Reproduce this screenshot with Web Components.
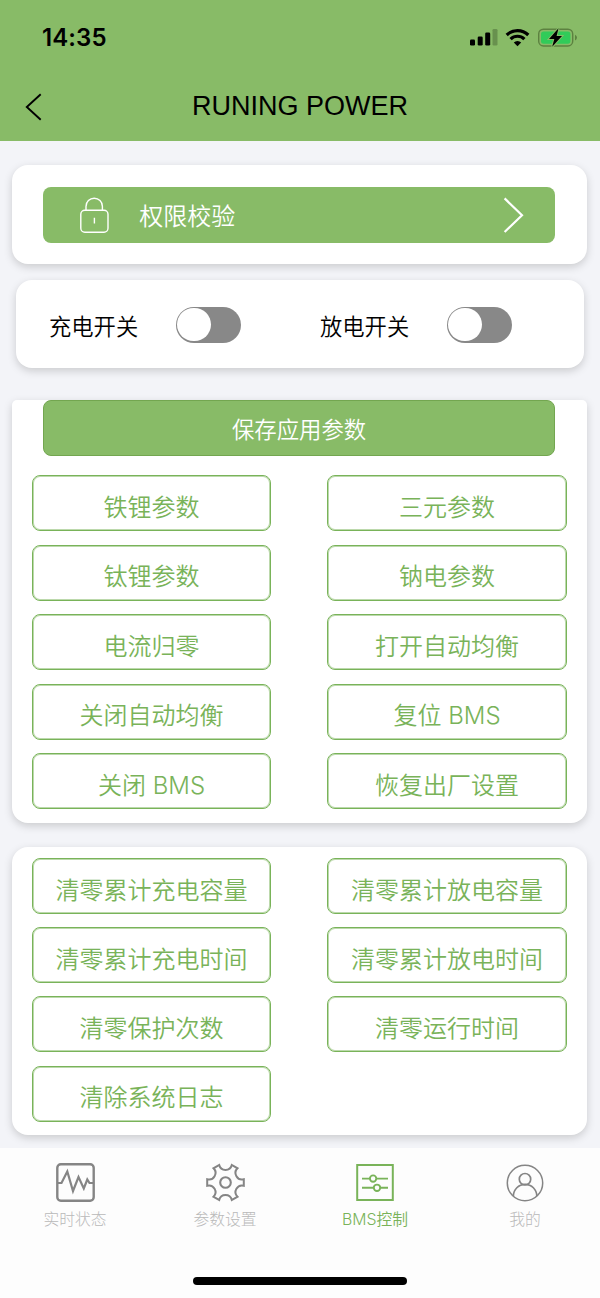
<!DOCTYPE html>
<html lang="zh-CN">
<head>
<meta charset="utf-8">
<title>RUNING POWER</title>
<style>
  body {
    margin: 0;
    background: #f3f4f8;
    font-family: "Liberation Sans", "Noto Sans CJK SC", sans-serif;
    --green: #88bb67;
    --line: #79b359;
    --light-font: Inter, "Noto Sans CJK SC", sans-serif;
  }
</style>
</head>
<body>
<bms-app></bms-app>

<script>
class StatusBar extends HTMLElement {
  constructor() {
    super();
    this.attachShadow({ mode: 'open' });
    this.shadowRoot.innerHTML = `
      <style>
        :host {
          display: flex;
          justify-content: space-between;
          align-items: center;
          height: 74px;
          padding: 1px 23px 0 42px;
          box-sizing: border-box;
        }
        #time {
          font: 600 24px/30px Inter, sans-serif;
          letter-spacing: 0.1px;
        }
        svg { display: block; }
      </style>
      <span id="time">14:35</span>
      <svg width="108" height="24" viewBox="469 25.5 108 24">
        <rect x="470" y="39" width="5" height="6" rx="1.3"/>
        <rect x="477.7" y="36" width="5" height="9" rx="1.3"/>
        <rect x="485.2" y="32" width="5" height="13" rx="1.3"/>
        <rect x="492.5" y="28.5" width="5" height="16.5" rx="1.3" fill="#68914e"/>
        <g fill="none" stroke="#000" stroke-width="3.2">
          <path d="M506.7 34.5 A15.5 15.5 0 0 1 528.3 34.5"/>
          <path d="M510.6 38.6 A9.8 9.8 0 0 1 524.4 38.6"/>
        </g>
        <path d="M513.8 42 A5.2 5.2 0 0 1 521.2 42 L517.5 45.8 Z"/>
        <rect x="538.7" y="28.7" width="34" height="16.8" rx="4.8" fill="none" stroke="#5c8140" stroke-width="1.4"/>
        <rect x="541" y="31" width="29.4" height="12.2" rx="2.6" fill="#31cb59"/>
        <path d="M575 34.2 Q577 35 577 37.1 Q577 39.2 575 40 Z" fill="#5c8140"/>
        <path d="M558.5 27.8 L549 38.6 H554.3 L552.2 46.3 L562 35.4 H556.6 Z" stroke="#88bb67" stroke-width="2" paint-order="stroke"/>
      </svg>
    `;
  }
}
customElements.define('status-bar', StatusBar);

class NavBar extends HTMLElement {
  constructor() {
    super();
    this.attachShadow({ mode: 'open' });
    this.shadowRoot.innerHTML = `
      <style>
        :host {
          display: grid;
          grid-template-columns: 60px 1fr 60px;
          align-items: center;
          height: 67px;
          padding-bottom: 3px;
          box-sizing: border-box;
        }
        svg { display: block; margin: 2px 0 0 24px; }
        h1 {
          margin: 0;
          font-size: 27px;
          line-height: 32px;
          font-weight: 400;
          text-align: center;
        }
      </style>
      <svg width="20" height="28" viewBox="0 0 20 28" fill="none" stroke="#000" stroke-width="1.9">
        <path d="M16.7 1.2 L2.8 14 L16.7 26.8"/>
      </svg>
      <h1><slot></slot></h1>
    `;
  }
}
customElements.define('nav-bar', NavBar);

class BmsCard extends HTMLElement {
  constructor() {
    super();
    this.attachShadow({ mode: 'open' });
    this.shadowRoot.innerHTML = `
      <style>
        :host {
          display: block;
          box-sizing: border-box;
          background: #fff;
          border-radius: 16px;
          box-shadow: 0 3px 8px rgba(0, 0, 0, 0.17);
        }
      </style>
      <slot></slot>
    `;
  }
}
customElements.define('bms-card', BmsCard);

class AuthButton extends HTMLElement {
  constructor() {
    super();
    this.attachShadow({ mode: 'open' });
    this.shadowRoot.innerHTML = `
      <style>
        :host {
          display: flex;
          align-items: center;
          height: 56px;
          padding: 0 30px 0 35px;
          box-sizing: border-box;
          border-radius: 8px;
          background: var(--green);
          color: #fff;
          font-size: 24px;
          line-height: 32px;
        }
        span { flex: 1; margin-left: 29px; padding-top: 3px; font-weight: 350; }
        svg { display: block; }
      </style>
      <svg width="32" height="40" viewBox="79 195 32 40" fill="none" stroke="#fff" stroke-width="1.4">
        <rect x="81.8" y="210.2" width="27.2" height="22" rx="4"/>
        <path d="M87 210 V206.4 A8.2 8.2 0 0 1 103.4 206.4 V210 M95.4 217.8 V223.6"/>
      </svg>
      <span><slot></slot></span>
      <svg width="22" height="36" viewBox="503 197 22 36" fill="none" stroke="#fff" stroke-width="2.2">
        <path d="M504.6 198.4 L522 215.2 L504.6 232"/>
      </svg>
    `;
  }
}
customElements.define('auth-button', AuthButton);

class LabelSwitch extends HTMLElement {
  constructor() {
    super();
    this.attachShadow({ mode: 'open' });
    this.shadowRoot.innerHTML = `
      <style>
        :host {
          flex: none;
          display: flex;
          align-items: center;
          gap: 38px;
          width: 271px;
          font-size: 22.3px;
          line-height: 30px;
          font-weight: 350;
          color: #000;
        }
        #label { padding-top: 6px; }
        #track {
          width: 65px;
          height: 36px;
          padding: 1.2px;
          box-sizing: border-box;
          border-radius: 18px;
          background: #888;
        }
        #thumb {
          width: 33.6px;
          height: 33.6px;
          border-radius: 50%;
          background: #fff;
        }
      </style>
      <span id="label"><slot></slot></span>
      <div id="track"><div id="thumb"></div></div>
    `;
  }
}
customElements.define('label-switch', LabelSwitch);

class BmsButton extends HTMLElement {
  constructor() {
    super();
    this.attachShadow({ mode: 'open' });
    this.shadowRoot.innerHTML = `
      <style>
        :host {
          display: flex;
          align-items: center;
          justify-content: center;
          height: 56px;
          padding-top: 9px;
          box-sizing: border-box;
          border: 1px solid var(--line);
          border-radius: 8px;
          box-shadow: inset 0 0 0 1px rgba(121, 179, 89, 0.5);
          background: #fff;
          color: var(--line);
          font-family: var(--light-font);
          font-size: 24px;
          line-height: 32px;
          font-weight: 350;
        }
        :host([primary]) {
          padding-top: 3px;
          border: 1px solid #73a650;
          box-shadow: none;
          background: var(--green);
          color: #fff;
          font-size: 22.4px;
        }
      </style>
      <span><slot></slot></span>
    `;
  }
}
customElements.define('bms-button', BmsButton);

class ButtonGrid extends HTMLElement {
  constructor() {
    super();
    this.attachShadow({ mode: 'open' });
    this.shadowRoot.innerHTML = `
      <style>
        :host {
          display: grid;
          grid-template-columns: 239.5px 239.5px;
          column-gap: 56px;
          row-gap: 13.6px;
          padding-left: 20.3px;
        }
      </style>
      <slot></slot>
    `;
  }
}
customElements.define('button-grid', ButtonGrid);

const TAB_ICONS = {
  status: `
    <rect x="1.3" y="1.3" width="36.4" height="36.4" rx="3.5" stroke-width="2.4"/>
    <path d="M2 20 H5.5 L11.3 8.5 L17 28 L22.5 14 L27.8 25.5 L31.3 16.5 L33.5 20 H37" stroke-width="2.2"/>`,
  settings: `
    <circle cx="19.5" cy="19.5" r="5.3" stroke-width="2.1"/>
    <path stroke-width="2" d="M13.2 2 A6.5 6.5 0 0 0 25.8 2 L31.5 5.3 A6.5 6.5 0 0 0 37.8 16.2 V22.8 A6.5 6.5 0 0 0 31.5 33.7 L25.8 37 A6.5 6.5 0 0 0 13.2 37 L7.5 33.7 A6.5 6.5 0 0 0 1.2 22.8 V16.2 A6.5 6.5 0 0 0 7.5 5.3 Z"/>`,
  control: `
    <rect x="1.2" y="2" width="35.6" height="35" stroke-width="2"/>
    <path d="M6 15.6 H13.8 M20.4 15.6 H32 M6 24.8 H17.8 M24.2 24.8 H32" stroke-width="1.9"/>
    <circle cx="17.1" cy="15.6" r="3.2" stroke-width="1.9"/>
    <circle cx="21" cy="24.8" r="3.2" stroke-width="1.9"/>`,
  mine: `
    <circle cx="19" cy="20" r="17.7" stroke-width="1.5"/>
    <circle cx="19" cy="16.2" r="5.7" stroke-width="1.7"/>
    <path d="M7.4 33 A11.7 11.7 0 0 1 30.8 33" stroke-width="1.7"/>`
};

class TabItem extends HTMLElement {
  constructor() {
    super();
    this.attachShadow({ mode: 'open' });
  }

  connectedCallback() {
    this.shadowRoot.innerHTML = `
      <style>
        :host {
          flex: 1;
          display: flex;
          flex-direction: column;
          align-items: center;
          padding-top: 15px;
          color: #b9b9b9;
          font-family: var(--light-font);
          font-size: 15.8px;
          line-height: 22px;
          font-weight: 300;
        }
        svg { display: block; margin-bottom: 7px; stroke: #858585; }
        :host([active]) { color: var(--line); font-weight: 350; }
        :host([active]) svg { stroke: var(--line); }
      </style>
      <svg width="39" height="39" viewBox="0 0 39 39" fill="none">${TAB_ICONS[this.getAttribute('icon')]}</svg>
      <span><slot></slot></span>
    `;
  }
}
customElements.define('tab-item', TabItem);

class TabBar extends HTMLElement {
  constructor() {
    super();
    this.attachShadow({ mode: 'open' });
    this.shadowRoot.innerHTML = `
      <style>
        :host {
          display: flex;
          flex-direction: column;
          justify-content: space-between;
          align-items: center;
          background: #fdfdfd;
        }
        nav { display: flex; width: 100%; }
        #home {
          width: 214px;
          height: 8px;
          margin-bottom: 13px;
          border-radius: 4px;
          background: #000;
        }
      </style>
      <nav><slot></slot></nav>
      <div id="home"></div>
    `;
  }
}
customElements.define('tab-bar', TabBar);

class BmsApp extends HTMLElement {
  constructor() {
    super();
    this.attachShadow({ mode: 'open' });
    this.shadowRoot.innerHTML = `
      <style>
        :host {
          display: flex;
          flex-direction: column;
          width: 600px;
          height: 1298px;
          overflow: hidden;
        }
        header { height: 141px; flex: none; background: var(--green); }
        main {
          flex: none;
          height: 1007px;
          padding: 24px 13px 0 11.5px;
          box-sizing: border-box;
          overflow: hidden;
        }
        .auth { height: 99px; padding: 22px 32px 0 31.7px; }
        .switches {
          display: flex;
          height: 88px;
          margin: 16px 3px 0 4.5px;
          padding: 1px 0 0 33px;
        }
        .params {
          height: 423px;
          margin-top: 32px;
          border-radius: 5px 5px 16px 16px;
        }
        .params bms-button[primary] { margin: 0 32px 19px 31.7px; }
        .clears { height: 287.5px; margin-top: 24px; padding-top: 11px; }
        .clears button-grid { row-gap: 13.2px; }
        tab-bar { flex: 1; }
      </style>
      <header>
        <status-bar></status-bar>
        <nav-bar>RUNING POWER</nav-bar>
      </header>
      <main>
        <bms-card class="auth">
          <auth-button>权限校验</auth-button>
        </bms-card>
        <bms-card class="switches">
          <label-switch>充电开关</label-switch>
          <label-switch>放电开关</label-switch>
        </bms-card>
        <bms-card class="params">
          <bms-button primary>保存应用参数</bms-button>
          <button-grid>
            <bms-button>铁锂参数</bms-button>
            <bms-button>三元参数</bms-button>
            <bms-button>钛锂参数</bms-button>
            <bms-button>钠电参数</bms-button>
            <bms-button>电流归零</bms-button>
            <bms-button>打开自动均衡</bms-button>
            <bms-button>关闭自动均衡</bms-button>
            <bms-button>复位 BMS</bms-button>
            <bms-button>关闭 BMS</bms-button>
            <bms-button>恢复出厂设置</bms-button>
          </button-grid>
        </bms-card>
        <bms-card class="clears">
          <button-grid>
            <bms-button>清零累计充电容量</bms-button>
            <bms-button>清零累计放电容量</bms-button>
            <bms-button>清零累计充电时间</bms-button>
            <bms-button>清零累计放电时间</bms-button>
            <bms-button>清零保护次数</bms-button>
            <bms-button>清零运行时间</bms-button>
            <bms-button>清除系统日志</bms-button>
          </button-grid>
        </bms-card>
      </main>
      <tab-bar>
        <tab-item icon="status">实时状态</tab-item>
        <tab-item icon="settings">参数设置</tab-item>
        <tab-item icon="control" active>BMS控制</tab-item>
        <tab-item icon="mine">我的</tab-item>
      </tab-bar>
    `;
  }
}
customElements.define('bms-app', BmsApp);
</script>
</body>
</html>
